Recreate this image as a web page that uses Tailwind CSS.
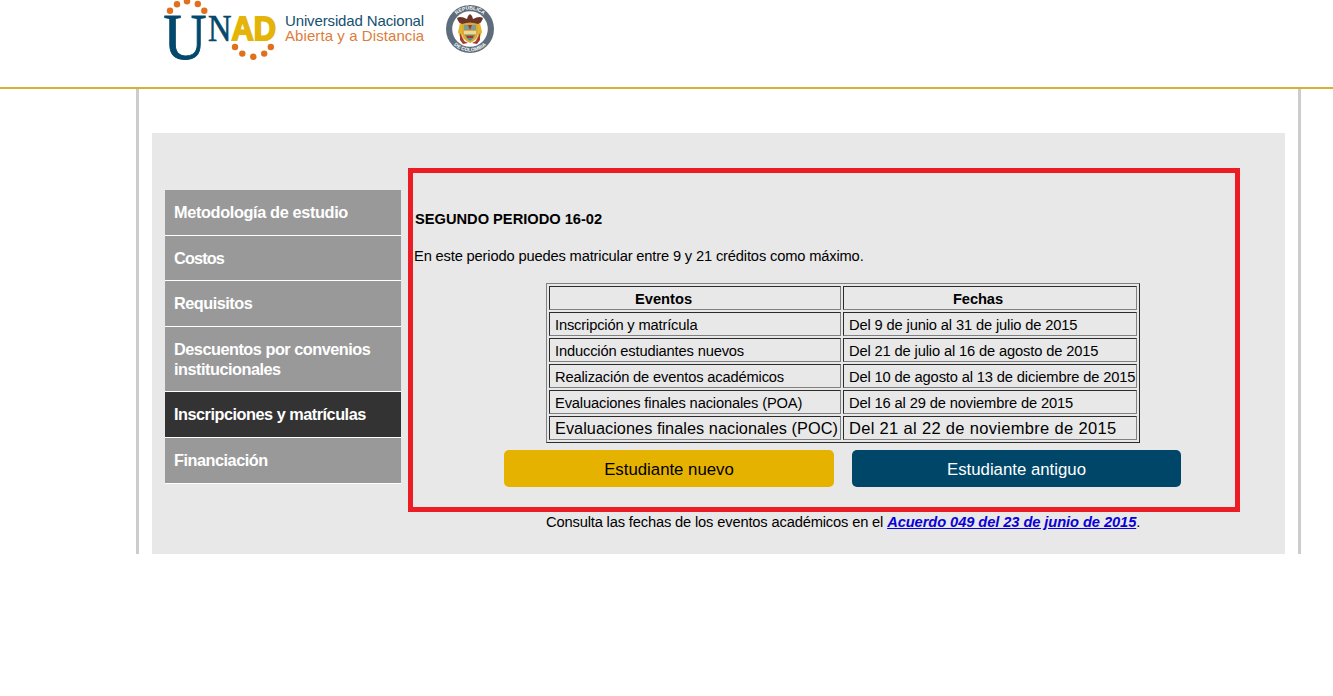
<!DOCTYPE html>
<html lang="es">
<head>
<meta charset="utf-8">
<title>UNAD - Inscripciones y matrículas</title>
<script src="https://cdn.jsdelivr.net/npm/@tailwindcss/browser@4"></script>
</head>
<body class="bg-white text-black font-['Liberation_Sans',sans-serif]">
<header class="h-[89px] border-b-2 border-[#d6b12f] pl-[160px] flex items-start">
  <svg class="w-[120px] h-[84px] shrink-0" viewBox="160 0 120 84" role="img" aria-label="UNAD">
    <g fill="#e0701c">
      <circle cx="170" cy="10.8" r="3.2"/><circle cx="177" cy="4.2" r="3.2"/><circle cx="187" cy="1.2" r="3.2"/><circle cx="197.8" cy="4" r="3.2"/><circle cx="204.3" cy="10.8" r="3.2"/>
      <circle cx="235" cy="47" r="3.2"/><circle cx="242.3" cy="53.6" r="3.2"/><circle cx="253.3" cy="56.8" r="3.2"/><circle cx="264.2" cy="53.6" r="3.2"/><circle cx="270.8" cy="47" r="3.2"/>
    </g>
    <g fill="#04486b" font-family="Liberation Serif, serif">
      <text x="163.500" y="59.200" font-size="65" textLength="43" lengthAdjust="spacingAndGlyphs" stroke="#04486b" stroke-width="1">U</text>
      <text x="208" y="40.500" font-size="37" textLength="23.500" lengthAdjust="spacingAndGlyphs" stroke="#04486b" stroke-width=".6">N</text>
    </g>
    <text x="231.500" y="40" textLength="44.500" lengthAdjust="spacingAndGlyphs" fill="#e4b408" stroke="#e4b408" stroke-width="1.800" font-family="Liberation Sans, sans-serif" font-weight="bold" font-size="33.500">AD</text>
  </svg>
  <div class="ml-[5px] mt-[13px] w-[160px] text-[15px] leading-[15px] whitespace-nowrap">
    <div class="text-[#14506f] tracking-[-0.137px]">Universidad Nacional</div>
    <div class="text-[#dd7d3c] tracking-[0.08px]">Abierta y a Distancia</div>
  </div>
  <svg class="w-[50px] h-[50px] mt-[4px] shrink-0" viewBox="0 0 50 50" role="img" aria-label="República de Colombia">
    <defs>
      <path id="arcTop" d="M5.500 25a19.500 19.500 0 0 1 39 0"/>
      <path id="arcBottom" d="M2.500 25a22.500 22.500 0 0 0 45 0"/>
    </defs>
    <circle cx="25" cy="25" r="24" fill="#5d6d7b"/>
    <circle cx="25" cy="25" r="17.800" fill="#fff"/>
    <g fill="#fff" font-family="Liberation Sans, sans-serif" font-weight="bold" font-size="5">
      <text><textPath href="#arcTop" startOffset="50%" text-anchor="middle">REPÚBLICA</textPath></text>
      <text><textPath href="#arcBottom" startOffset="50%" text-anchor="middle">DE COLOMBIA</textPath></text>
    </g>
    <path d="M23 12l2-2 2 2 1 3c4-2 7-3 10-1-1 4-4 7-8 8H20c-4-1-7-4-8-8 3-2 6-1 10 1z" fill="#6b352a"/>
    <path d="M15 19l4 2-2 11 3 6-4-2-3-8zM35 19l-4 2 2 11-3 6 4-2 3-8z" fill="#e3b42e"/>
    <path d="M15 29l4 8 4 2-5 1-3-4zM35 29l-4 8-4 2 5 1 3-4z" fill="#a33a35"/>
    <path d="M17 20q8-3 16 0v9c0 6-4 8-8 10-4-2-8-4-8-10z" fill="#d8ab38"/>
    <path d="M19 21h12v5H19z" fill="#7f9c94"/>
    <path d="M19 27h12v3H19z" fill="#e8d9a0"/>
    <path d="M20 31h10c-1 3-3 4-5 6-2-2-4-3-5-6z" fill="#5d8f84"/>
    <path d="M23 21h4l-2 5zM22 32h6v2h-6z" fill="#a8322e"/>
  </svg>
</header>

<main class="ml-[136px] w-[1165px] h-[465px] border-x-3 border-[#ccc] pl-[13px] pt-[44px]">
  <div class="w-[1133px] h-[421px] bg-[#e8e8e8] pl-[13px] flex">
    <nav class="w-[236px] mt-[57px] shrink-0 text-white font-bold text-[16.3px] leading-[20px] tracking-[-0.49px]">
      <a class="flex items-center h-[46px] pl-[9px] pb-[2px] bg-[#999] border-b border-white tracking-[-0.36px]">Metodología de estudio</a>
      <a class="flex items-center h-[45px] pl-[9px] bg-[#999] border-b border-white tracking-[-0.85px]">Costos</a>
      <a class="flex items-center h-[46px] pl-[9px] pb-[2px] bg-[#999] border-b border-white">Requisitos</a>
      <a class="flex items-center h-[65px] pl-[9px] bg-[#999] border-b border-white">Descuentos por convenios<br>institucionales</a>
      <a class="flex items-center h-[46px] pl-[9px] pb-[2px] bg-[#333] border-b border-white">Inscripciones y matrículas</a>
      <a class="flex items-center h-[46px] pl-[9px] pb-[2px] bg-[#999] border-b border-white">Financiación</a>
    </nav>
    <div class="ml-[7px] mt-[35px] w-[832px] shrink-0 text-[14.7px] leading-[20px] tracking-[-0.16px]">
      <section class="h-[344px] border-5 border-[#ec1c24] pl-[1px] pt-[36px]">
        <h1 class="font-bold pl-[1px] tracking-[-0.03px]">SEGUNDO PERIODO 16-02</h1>
        <p class="mt-[17px]">En este periodo puedes matricular entre 9 y 21 créditos como máximo.</p>
        <div class="ml-[132px] mt-[17px] w-[594px] h-[160px] border border-t-[#808080] border-l-[#808080] border-r-[#2b2b2b] border-b-[#2b2b2b] p-[2px] grid grid-cols-[292px_294px] auto-rows-[24px] gap-[2px] whitespace-nowrap leading-[25px] *:border *:border-t-[#2b2b2b] *:border-l-[#2b2b2b] *:border-r-[#808080] *:border-b-[#808080] *:pl-[5px]">
          <div class="font-bold text-center tracking-[0px] pr-[68px]">Eventos</div>
          <div class="font-bold text-center tracking-[-0.1px] pr-[29px]">Fechas</div>
          <div>Inscripción y matrícula</div><div class="tracking-[-0.14px]">Del 9 de junio al 31 de julio de 2015</div>
          <div>Inducción estudiantes nuevos</div><div class="tracking-[-0.14px]">Del 21 de julio al 16 de agosto de 2015</div>
          <div>Realización de eventos académicos</div><div class="tracking-[-0.14px]">Del 10 de agosto al 13 de diciembre de 2015</div>
          <div>Evaluaciones finales nacionales (POA)</div><div class="tracking-[-0.14px]">Del 16 al 29 de noviembre de 2015</div>
          <div class="text-[16.3px] leading-[23px] tracking-[0.04px]">Evaluaciones finales nacionales (POC)</div><div class="text-[16.5px] leading-[23px] tracking-[0.32px]">Del 21 al 22 de noviembre de 2015</div>
        </div>
        <div class="flex mt-[7px] ml-[90px] gap-[18px] text-center text-[16.8px] leading-[40px] tracking-[0px]">
          <a class="w-[330px] h-[37px] rounded-[5px] bg-[#e6b200]">Estudiante nuevo</a>
          <a class="w-[329px] h-[37px] rounded-[5px] bg-[#004669] text-white">Estudiante antiguo</a>
        </div>
      </section>
      <p class="ml-[138px] whitespace-nowrap">Consulta las fechas de los eventos académicos en el <a class="font-bold italic underline text-[#0a00d8] tracking-[-0.09px]">Acuerdo 049 del 23 de junio de 2015</a>.</p>
    </div>
  </div>
</main>
</body>
</html>
